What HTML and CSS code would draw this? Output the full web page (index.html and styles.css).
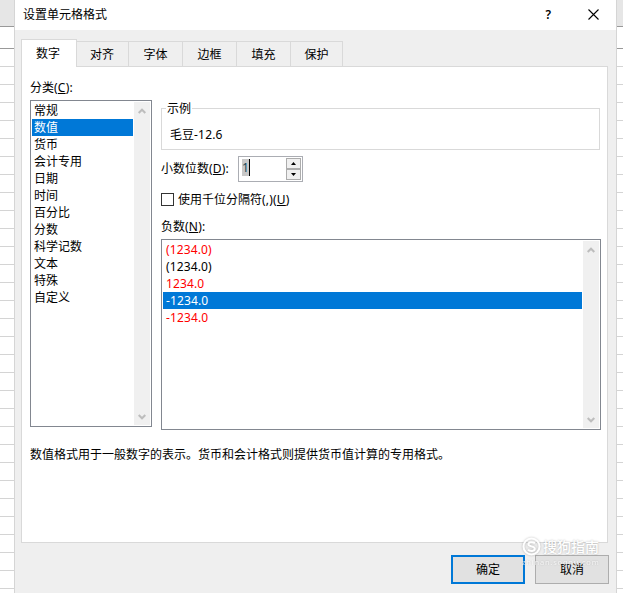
FILE: index.html
```html
<!DOCTYPE html>
<html lang="zh-CN">
<head>
<meta charset="utf-8">
<title>设置单元格格式</title>
<link rel="stylesheet" href="styles.css">
</head>
<body>
<main class="sheet">
  <section class="dialog">
    <header class="titlebar">
      <span class="title">设置单元格格式</span>
      <span class="help">?</span>
      <svg class="close" width="11" height="11" viewBox="0 0 11 11"><path d="M.5 .5l10 10M10.5 .5l-10 10"/></svg>
    </header>
    <nav class="tabs">
      <span class="tab active">数字</span><span class="tab first">对齐</span><span class="tab">字体</span><span class="tab">边框</span><span class="tab">填充</span><span class="tab last">保护</span>
    </nav>
    <div class="panel">
      <div class="columns">
        <div class="categories">
          <div class="label">分类<span class="key">(<u>C</u>):</span></div>
          <div class="listbox">
            <ul>
              <li>常规</li><li class="selected">数值</li><li>货币</li><li>会计专用</li><li>日期</li><li>时间</li><li>百分比</li><li>分数</li><li>科学记数</li><li>文本</li><li>特殊</li><li>自定义</li>
            </ul>
            <div class="scroll">
              <svg width="8" height="6" viewBox="0 0 8 6"><path d="M.7 5L4 1.7L7.3 5"/></svg>
              <svg width="8" height="6" viewBox="0 0 8 6"><path d="M.7 1L4 4.3L7.3 1"/></svg>
            </div>
          </div>
        </div>
        <div class="options">
          <div class="sample"><span class="legend">示例</span><span class="value">毛豆<span class="key">-12.6</span></span></div>
          <div class="decimals">
            <span class="decimals-label">小数位数<span class="key">(<u>D</u>):</span></span>
            <div class="spinner">
              <span class="number">1</span>
              <div class="steps">
                <span class="step"><svg width="5" height="3" viewBox="0 0 5 3"><path d="M0 3L2.5 0L5 3z"/></svg></span>
                <span class="step"><svg width="5" height="3" viewBox="0 0 5 3"><path d="M0 0L2.5 3L5 0z"/></svg></span>
              </div>
            </div>
          </div>
          <div class="thousands"><span class="checkbox"></span><span>使用千位分隔符<span class="key">(,)(<u>U</u>)</span></span></div>
          <div class="label negative-label">负数<span class="key">(<u>N</u>):</span></div>
          <div class="listbox negatives">
            <ul>
              <li class="red">(1234.0)</li><li>(1234.0)</li><li class="red">1234.0</li><li class="selected">-1234.0</li><li class="red">-1234.0</li>
            </ul>
            <div class="scroll">
              <svg width="8" height="6" viewBox="0 0 8 6"><path d="M.7 5L4 1.7L7.3 5"/></svg>
              <svg width="8" height="6" viewBox="0 0 8 6"><path d="M.7 1L4 4.3L7.3 1"/></svg>
            </div>
          </div>
        </div>
      </div>
      <p class="description">数值格式用于一般数字的表示。货币和会计格式则提供货币值计算的专用格式。</p>
    </div>
    <footer class="actions"><span class="button primary">确定</span><span class="button">取消</span></footer>
    <div class="watermark">
      <svg width="19" height="19" viewBox="0 0 19 19"><circle cx="9.5" cy="9.5" r="8"/><path d="M13 6.3C11 4.6 6.4 4.8 6.4 7.3C6.4 10 12.8 8.8 12.8 11.8C12.8 14.4 8 14.5 6 12.6"/></svg>
      <span class="brand">搜狗指南</span>
      <span class="site">zhinan.sogou.com</span>
    </div>
  </section>
</main>
</body>
</html>
```
FILE: styles.css
```css
* { box-sizing: border-box; }
body {
  margin: 0;
  overflow: hidden;
  font: 12px/17px "Noto Sans", "Noto Sans CJK SC", sans-serif;
  color: #000;
}
svg { display: block; }
u { text-decoration: underline; text-underline-offset: 1px; text-decoration-thickness: 1px; }
.key { letter-spacing: .2px; }
.sheet {
  height: 593px;
  padding-left: 14px;
  background:
    linear-gradient(#e6e6e6, #e6e6e6) 0 0 / 100% 26px no-repeat,
    linear-gradient(#999, #999) 0 26px / 100% 1px no-repeat,
    linear-gradient(#fff, #fff) 0 27px / 100% 21px no-repeat,
    linear-gradient(#999, #999) 0 48px / 100% 1px no-repeat,
    repeating-linear-gradient(#d4d4d4 0 1px, #fff 1px 18px) 0 12px;
}
.dialog {
  position: relative;
  display: flex;
  flex-direction: column;
  width: 603px;
  height: 593px;
  background: #efefef;
  border: solid #d5d5d5;
  border-width: 0 1px;
}
.titlebar {
  display: flex;
  align-items: center;
  height: 30px;
  padding: 0 17px 2px 8px;
  background: #fff;
}
.title { flex: 1; }
.help { margin-right: 37px; font: 600 12px/17px "Noto Sans", sans-serif; }
.close { fill: none; stroke: #000; stroke-width: 1.1; }
.tabs {
  position: relative;
  display: flex;
  align-items: flex-end;
  height: 37px;
  padding-left: 6px;
  margin-bottom: -1px;
}
.tab {
  width: 54px;
  height: 26px;
  border: solid #d9d9d9;
  border-width: 1px 1px 1px 0;
  line-height: 26px;
  text-align: center;
}
.tab.active { width: 56px; height: 28px; border-width: 1px 1px 0; background: #fff; line-height: 28px; padding-right: 2px; }
.tab.first, .tab.last { width: 52px; }
.tab.first { padding-right: 1px; }
.panel {
  width: 587px;
  height: 477px;
  margin-left: 6px;
  padding: 12px 6px 0 8px;
  border: 1px solid #d9d9d9;
  background: #fff;
}
.columns { display: flex; gap: 9px; }
.categories { width: 122px; }
.label { height: 17px; }
.listbox {
  display: flex;
  height: 327px;
  margin-top: 4px;
  padding: 1px;
  border: 1px solid #828790;
}
.listbox ul { flex: 1; margin: 0 1px 0 0; padding: 0; list-style: none; }
.listbox li { height: 17px; padding-left: 2px; }
.listbox .selected { background: #0078d7; color: #fff; }
.listbox .red { color: #f00; }
.scroll {
  display: flex;
  flex-direction: column;
  justify-content: space-between;
  align-items: center;
  width: 16px;
  padding: 6px 0 5px;
  background: #f0f0f0;
}
.scroll svg { fill: none; stroke: #bdbdbd; stroke-width: 2; }
.options { width: 440px; padding-top: 29px; }
.sample {
  display: flex;
  flex-direction: column;
  width: 439px;
  height: 42px;
  padding-left: 4px;
  border: 1px solid #d9d9d9;
}
.legend { align-self: flex-start; height: 17px; margin-top: -9px; padding: 0 1px; background: #fff; }
.value { margin: 9px 0 0 4px; }
.decimals { display: flex; gap: 9px; margin-top: 6px; }
.decimals-label { width: 68px; padding-top: 4px; white-space: nowrap; }
.spinner {
  display: flex;
  justify-content: space-between;
  width: 65px;
  height: 26px;
  padding: 1px;
  border: 1px solid #abadb3;
}
.number { width: 8px; height: 17px; margin: 1px 0 0 2px; background: #c8c8c8; border-right: 1px solid #000; color: #16495a; }
.steps { display: flex; flex-direction: column; width: 15px; }
.step { display: flex; align-items: center; justify-content: center; height: 11px; border: 1px solid #acacac; background: #f0f0f0; }
.thousands { display: flex; align-items: center; gap: 4px; height: 17px; margin-top: 9px; }
.checkbox { width: 13px; height: 13px; border: 1px solid #333; }
.negative-label { margin-top: 10px; }
.options .negatives { height: 191px; margin-top: 4px; }
.negatives li { padding-left: 3px; letter-spacing: .12px; }
.description { margin: 16px 0 0; }
.actions { display: flex; gap: 10px; margin: 12px 0 0 436px; }
.button { width: 74px; height: 29px; border: 1px solid #adadad; background: #e1e1e1; line-height: 27px; text-align: center; }
.button.primary { border: 2px solid #0078d7; line-height: 25px; }
.watermark {
  position: absolute;
  left: 507px;
  top: 537px;
  display: grid;
  grid-template-columns: 21px auto;
  color: #fff;
  text-shadow: 0 0 2px rgba(0, 0, 0, .3);
}
.watermark svg { fill: none; stroke: #fff; stroke-width: 2; filter: drop-shadow(0 0 1px rgba(0, 0, 0, .25)); }
.brand { font-size: 14px; font-weight: 500; line-height: 19px; }
.site { grid-column: 1 / 3; font: 7.5px/12px "Noto Sans", sans-serif; letter-spacing: .8px; white-space: nowrap; opacity: .7; }
```
